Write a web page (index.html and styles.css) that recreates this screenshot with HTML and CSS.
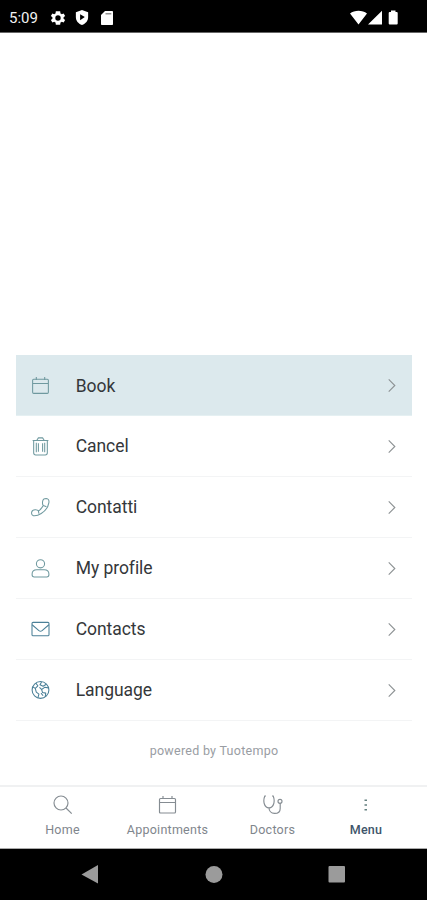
FILE: index.html
```
<!DOCTYPE html>
<html lang="en">
<head>
<meta charset="utf-8">
<meta name="viewport" content="width=device-width, initial-scale=1">
<title>Menu</title>
<link rel="stylesheet" href="styles.css">
</head>
<body>
<div class="screen">
  <header class="status">
    <span class="clock">5:09</span>
    <svg class="gear" viewBox="0 0 24 24" width="18" height="18"><path fill="#fff" fill-rule="evenodd" d="M19.4 13a7.500 7.500 0 0 0 0-2l2.100-1.600-2-3.500-2.500 1a7.700 7.700 0 0 0-1.700-1L14.900 3H9.100l-.4 2.900a7.700 7.700 0 0 0-1.700 1l-2.500-1-2 3.500L4.600 11a7.500 7.500 0 0 0 0 2l-2.100 1.600 2 3.500 2.500-1a7.700 7.700 0 0 0 1.700 1l.4 2.900h5.800l.4-2.900a7.700 7.700 0 0 0 1.700-1l2.500 1 2-3.500zM12 15.600a3.600 3.600 0 1 1 0-7.200 3.600 3.600 0 0 1 0 7.200z"/></svg>
    <svg class="shield" viewBox="0 0 16 18" width="16" height="17"><path fill="#fff" fill-rule="evenodd" d="M8 1l6.500 2.500v5C14.500 12.500 12 15.500 8 17 4 15.500 1.500 12.500 1.500 8.500v-5zM6 5.500v6.300L11 8.600z"/></svg>
    <svg class="card" viewBox="0 0 14 16" width="14" height="16"><path fill="#fff" d="M5 1h7.200q.8 0 .8.800v12.400q0 .8-.8.800H1.800q-.8 0-.8-.8V5z"/><path stroke="#777" stroke-width="1.200" d="M5.500 3.800h5.800"/></svg>
    <span class="grow"></span>
    <svg viewBox="0 0 49 18" width="49" height="18" fill="#fff"><path d="M0 4.500C4.500.7 12.500.7 17 4.500L8.500 15.500zM18 15.500L32 1.800v13.700zM41 1.500h4.500V3h1.200q1 0 1 1v10.500q0 1-1 1h-7q-1 0-1-1V4q0-1 1-1H41z"/></svg>
  </header>

  <main class="content">
    <nav class="menu">
      <a class="row active">
        <svg class="icon" viewBox="0 0 20 20"><path d="M3.500 4h13q1 0 1 1v11.500q0 1-1 1h-13q-1 0-1-1V5q0-1 1-1zM2.500 8h15M6 2V4.800M14 2V4.800"/></svg>
        <span>Book</span><svg class="chevron" viewBox="0 0 10 16"><path d="M1.500 1.500L8 8l-6.500 6.500"/></svg>
      </a>
      <a class="row">
        <svg class="icon" viewBox="0 0 20 20"><path d="M2.500 4.200h15M3.500 4.200v11.800q0 2 2 2h9q2 0 2-2V4.200M6.500 4L8 1.800h4L13.500 4M8 7v8M12 7v8M6 6.500v9M14 6.500v9"/></svg>
        <span>Cancel</span><svg class="chevron" viewBox="0 0 10 16"><path d="M1.500 1.500L8 8l-6.500 6.500"/></svg>
      </a>
      <a class="row">
        <svg class="icon" viewBox="0 0 20 20"><path d="M12 4.300Q12.300 1.500 15.500 1.500 18.500 1.700 18 5.300 17 11.800 10.700 15.700 6.700 18.300 3.200 17.800 1 17 1.600 14.500 2.200 12 5.300 12.200 7.500 12.300 8 13.300 10.800 11.500 12.700 8.200 11.600 7 12 4.300zM8 13.300l.5 2.500M12.700 8.200l3 1"/></svg>
        <span>Contatti</span><svg class="chevron" viewBox="0 0 10 16"><path d="M1.500 1.500L8 8l-6.500 6.500"/></svg>
      </a>
      <a class="row">
        <svg class="icon" viewBox="0 0 20 20"><circle cx="10" cy="5.500" r="3.900"/><path d="M6.500 11.200h7q4.500 0 4.500 4v.8q0 2-2 2H4q-2 0-2-2v-.8q0-4 4.500-4z"/></svg>
        <span>My profile</span><svg class="chevron" viewBox="0 0 10 16"><path d="M1.500 1.500L8 8l-6.500 6.500"/></svg>
      </a>
      <a class="row mail">
        <svg class="icon" viewBox="0 0 20 20"><rect x="1.900" y="3.200" width="16.200" height="12.800" rx="1"/><path d="M2 5.500l6.500 5.500q1.500 1.300 3 0L18 5.500"/></svg>
        <span>Contacts</span><svg class="chevron" viewBox="0 0 10 16"><path d="M1.500 1.500L8 8l-6.500 6.500"/></svg>
      </a>
      <a class="row mail">
        <svg class="icon" viewBox="0 0 20 20"><circle cx="10" cy="9.500" r="8"/><path d="M5.500 3l2 2.500L5 8l1 3.500 2.500 2-1 3.500M2.500 6.500L5 8M11 1.800L9.500 4.500l3 1.500L15.500 4M17.500 7.500L14 7l-3 2 1 3 3 .5-.5 3.500M9 7l2 2M10.500 12.500l2 2.500"/></svg>
        <span>Language</span><svg class="chevron" viewBox="0 0 10 16"><path d="M1.500 1.500L8 8l-6.500 6.500"/></svg>
      </a>
    </nav>
    <p class="powered">powered by Tuotempo</p>
  </main>

  <nav class="tabs">
    <a class="tab home"><svg viewBox="0 0 20 20"><circle cx="8" cy="8" r="7"/><path d="M13 13l5.700 5.700"/></svg><span>Home</span></a>
    <a class="tab appointments"><svg viewBox="0 0 20 20"><path d="M2.500 3.500h14q1 0 1 1V17q0 1-1 1h-14q-1 0-1-1V4.500q0-1 1-1zM1.500 7.500h16M5 1v3M14 1v3"/></svg><span>Appointments</span></a>
    <a class="tab doctors"><svg viewBox="0 0 20 20"><path d="M3 1H1.800C-.2 6 1 12.800 6 12.800S12.200 6 10.200 1H9M6 12.800c0 3 2 5.600 5.600 5.600s5.600-2 5.600-5V8.300"/><circle cx="17" cy="6.300" r="2"/></svg><span>Doctors</span></a>
    <a class="tab current"><svg viewBox="0 0 20 20"><path d="M8.500 5.200h2.500M8.500 10h2.500M8.500 14.800h2.500"/></svg><span>Menu</span></a>
  </nav>

  <footer class="system">
    <svg viewBox="0 0 427 50" width="427" height="50" fill="#9b9b9b"><path d="M81.500 25.500L98 16v18.500z"/><circle cx="214" cy="25.500" r="8.500"/><rect x="328.500" y="17" width="16.500" height="16.500" rx="1"/></svg>
  </footer>
</div>
</body>
</html>
```
FILE: styles.css
```
* { box-sizing: border-box; }
body { margin: 0; background: #fff; font-family: Roboto, "Liberation Sans", sans-serif; }
.screen { width: 427px; height: 900px; display: flex; flex-direction: column; overflow: hidden; }
.status { height: 33px; flex: none; background: #000; border-bottom: 1px solid #666; display: flex; align-items: center; padding: 3px 28px 0 9px; color: #f2f2f2; }
.clock { width: 40px; font-size: 15px; line-height: 18px; letter-spacing: 0; }
.shield { margin-left: 7px; }
.card { margin-left: 10px; }
.grow { flex: 1; }
.content { flex: 1; display: flex; flex-direction: column; justify-content: flex-end; padding: 0 15px 0 16px; }
.row { height: 60.900px; display: flex; align-items: center; padding: 1px 15.500px 0 14px; border-bottom: 1px solid #f3f4f5; color: #34373a; font-size: 17.500px; font-weight: 400; letter-spacing: -.05px; }
.row span { flex: 1; margin-left: 24.700px; }
.active { background: #dce9ed; border-color: #e5f0f2; }
.icon { width: 21px; height: 21px; fill: none; stroke: #6f999f; stroke-width: 1; stroke-linejoin: round; }
.mail .icon { stroke: #4b8098; }
.chevron { width: 10px; height: 15px; fill: none; stroke: #8d9294; stroke-width: 1.200; }
.powered { margin: 0; height: 64.500px; padding-top: 21px; text-align: center; font-size: 12.500px; line-height: 18px; color: #999da3; letter-spacing: .27px; }
.tabs { flex: none; height: 64px; border-top: 2px solid #f0f1f2; border-bottom: 1px solid #aaa; display: flex; padding-left: 10px; }
.tab { width: 105px; display: flex; flex-direction: column; align-items: center; padding-top: 8px; color: #7f868d; font-size: 12.500px; line-height: 16px; letter-spacing: .25px; }
.tab svg { width: 20px; height: 20px; margin-bottom: 7px; fill: none; stroke: #858c92; stroke-width: 1.150; }
.current { width: 82px; color: #40556a; font-weight: 500; }
.current svg { stroke: #658080; stroke-width: 1.500; }
.system { flex: none; height: 51px; background: #000; }
.system svg { display: block; }
```
